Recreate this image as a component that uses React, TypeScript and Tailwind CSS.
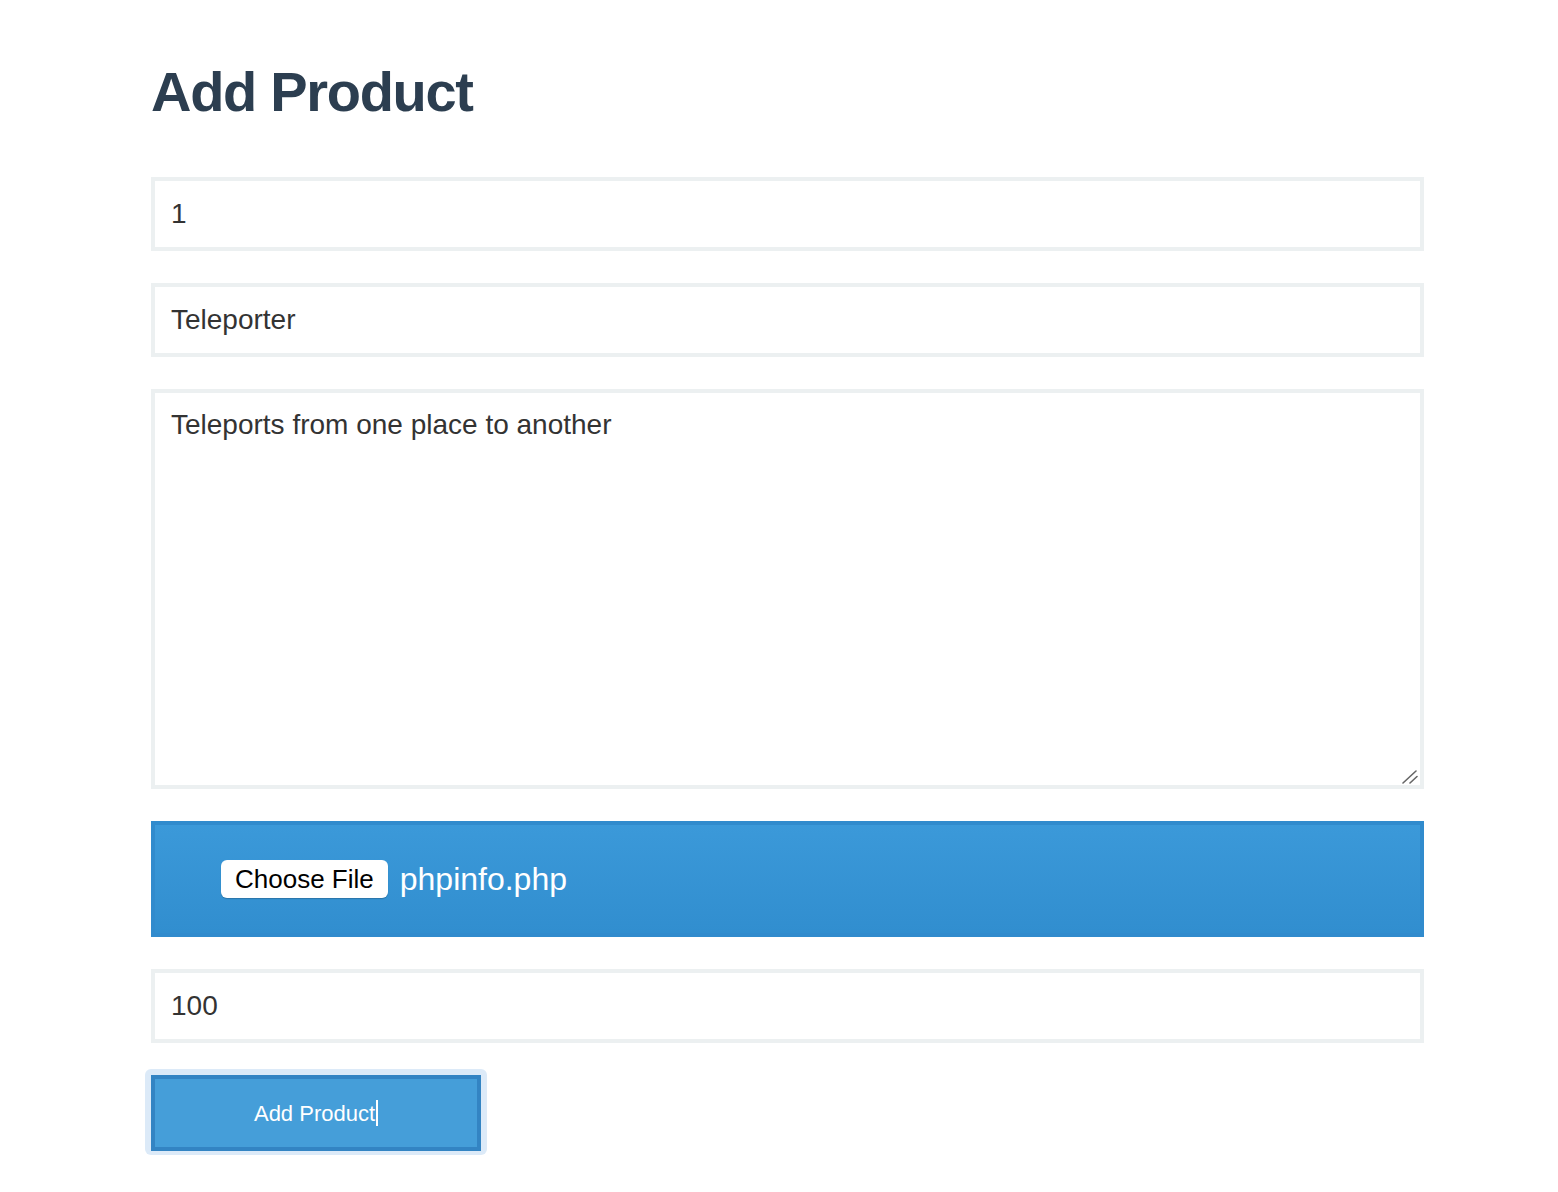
import { useState } from "react";

const fieldClass =
  "block w-full border-4 border-[#ecf0f1] bg-white px-4 text-[28px] text-[#333333] outline-none";

export default function App() {
  const [id, setId] = useState("1");
  const [name, setName] = useState("Teleporter");
  const [description, setDescription] = useState(
    "Teleports from one place to another"
  );
  const [price, setPrice] = useState("100");

  return (
    <div
      className="min-h-[1192px] bg-white"
      style={{ fontFamily: '"Liberation Sans", Arial, sans-serif' }}
    >
      <div className="ml-[151px] w-[1273px] pt-[57px]">
        <h1 className="text-[56px] font-bold leading-[70px] tracking-[-1.3px] text-[#2c3e50]">
          Add Product
        </h1>

        <form className="mt-[50px] flex flex-col gap-8" onSubmit={(e) => e.preventDefault()}>
          <input
            type="text"
            value={id}
            onChange={(e) => setId(e.target.value)}
            className={`${fieldClass} h-[74px]`}
          />
          <input
            type="text"
            value={name}
            onChange={(e) => setName(e.target.value)}
            className={`${fieldClass} h-[74px]`}
          />
          <div className="relative">
            <textarea
              value={description}
              onChange={(e) => setDescription(e.target.value)}
              className={`${fieldClass} h-[400px] resize-none pt-[16px] leading-[32px]`}
            />
            {/* resize grip */}
            <svg
              className="pointer-events-none absolute bottom-[5px] right-[6px]"
              width="16"
              height="14"
              viewBox="0 0 16 14"
              stroke="#666666"
              strokeWidth="1.6"
              strokeLinecap="round"
            >
              <line x1="1" y1="13" x2="14" y2="1" />
              <line x1="8" y1="13" x2="15" y2="6.5" />
            </svg>
          </div>

          <div className="flex h-[116px] items-center border-4 border-[#318bcd] bg-gradient-to-b from-[#3b99d9] to-[#318ecf] pl-[66px]">
            <span className="rounded-[6px] bg-white px-[14px] py-[3px] text-[26px] leading-[32px] text-black shadow-[0_1px_1px_rgba(0,0,0,0.2)]">
              Choose File
            </span>
            <span className="ml-[12px] text-[32px] leading-[38px] text-white">
              phpinfo.php
            </span>
          </div>

          <input
            type="text"
            value={price}
            onChange={(e) => setPrice(e.target.value)}
            className={`${fieldClass} h-[74px]`}
          />

          <div className="-ml-[6px] -mt-[6px] w-fit rounded-[6px] bg-[#dceaf8] px-[6px] pb-[4px] pt-[6px]">
            <button
              type="submit"
              className="flex h-[76px] w-[330px] items-center justify-center border-4 border-[#3384c3] bg-[#459ed9] text-[22px] text-white"
            >
              Add Product
              <span className="ml-px inline-block h-[26px] w-[2px] bg-white" />
            </button>
          </div>
        </form>
      </div>
    </div>
  );
}
